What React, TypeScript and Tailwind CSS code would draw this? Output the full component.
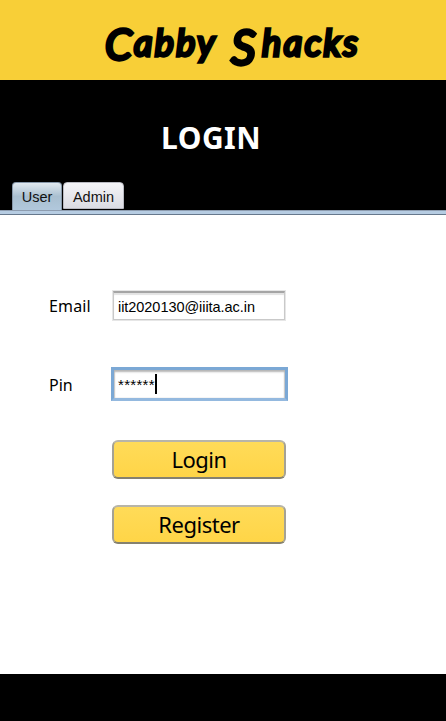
import React, { useState } from 'react';

const noto = "font-['Noto_Sans','Open_Sans',sans-serif]";
const arial = "font-['Liberation_Sans',Arial,sans-serif]";

function Title() {
  return (
    <h1 className="flex h-20 whitespace-nowrap bg-[#f8cf37] pl-[105px] pt-[17px] font-['Lato',sans-serif] text-[36px] font-normal italic leading-[50px] text-black [-webkit-text-stroke:3.4px_black] [stroke-linejoin:round]">
      <span className="flex w-[126px] tracking-[2.4px]">
        <span className="relative top-[2px] w-[29px] text-[43px]">C</span>
        <span>abby</span>
      </span>
      <span className="flex tracking-[2.6px]">
        <span className="relative top-[4px] w-[31px] text-[49px]">S</span>
        <span>hacks</span>
      </span>
    </h1>
  );
}

function SubmitButton({ label }: { label: string }) {
  return (
    <button
      type="button"
      className={`flex h-[39px] w-[174px] items-center justify-center rounded-[6px] border-2 border-x-[#a5a294] border-t-[#b8b5a8] border-b-[#85816f] bg-linear-to-b from-[#ffdb58] to-[#ffd547] pb-[2px] text-[22px] leading-none tracking-[-0.5px] text-black ${noto}`}
    >
      {label}
    </button>
  );
}

export default function App() {
  const [email, setEmail] = useState('iit2020130@iiita.ac.in');
  return (
    <main className="flex h-[721px] w-[446px] flex-col overflow-hidden bg-black">
      <Title />
      <section className="flex h-[130px] flex-col justify-between">
        <h2 className={`pl-[161px] pt-[38px] text-[30px] font-bold leading-[40px] tracking-[0.5px] text-white ${noto}`}>LOGIN</h2>
        <div className={`flex h-7 pl-3 text-[14.5px] leading-[28px] text-[#111] ${arial}`}>
          <div className="h-7 w-[50px] rounded-t-[4px] border border-b-0 border-[#8798aa] bg-linear-to-b from-[#e1e9ef] via-[#a9bfd0] to-[#b1c8dc] text-center">User</div>
          <div className="ml-px h-[27px] w-[61px] rounded-t-[4px] border border-[#b9bac2] bg-linear-to-b from-[#f4f4f7] to-[#dbdce3] text-center">Admin</div>
        </div>
      </section>
      <div className="h-[5px] shrink-0 border-y border-t-[#8d9caf] border-b-[#66788c] bg-[#b6cce2]" />
      <form className="h-[459px] bg-white pl-[49px] pt-[75px]">
        <label className={`flex h-[31px] items-center text-[16px] tracking-[0.15px] text-black ${noto}`}>
          <span className="w-[64px]">Email</span>
          <input
            value={email}
            onChange={(event) => setEmail(event.target.value)}
            className={`h-[29px] w-[172px] border border-[#c9c9c9] border-t-2 border-t-[#a5a5a5] bg-white pl-1 pt-[2px] text-[14.5px] tracking-[-0.05px] outline-none shadow-[inset_0_2px_1px_#e3e3e3,0_0_0_1px_#e6e6e6] ${arial}`}
          />
        </label>
        <div className={`mt-[46px] flex h-[34px] items-center text-[16px] text-black ${noto}`}>
          <span className="w-[62px] pt-[2px]">Pin</span>
          <div className={`flex h-[34px] w-[177px] border-[3px] border-x-[#7ba8d5] border-t-[#7ba8d5] border-b-[#94b9df] bg-white pl-1 text-[15px] shadow-[inset_0_2px_2px_#b5b5b5,inset_1px_0_1px_#ccc,inset_-1px_0_1px_#ccc] ${arial}`}>
            <span className="pt-[5px] leading-[20px] tracking-[0.3px]">******</span>
            <span className="mt-[4px] h-[20px] w-[2px] bg-black" />
          </div>
        </div>
        <div className="mt-[39px] flex flex-col gap-[26px] pl-[63px]">
          <SubmitButton label="Login" />
          <SubmitButton label="Register" />
        </div>
      </form>
    </main>
  );
}
